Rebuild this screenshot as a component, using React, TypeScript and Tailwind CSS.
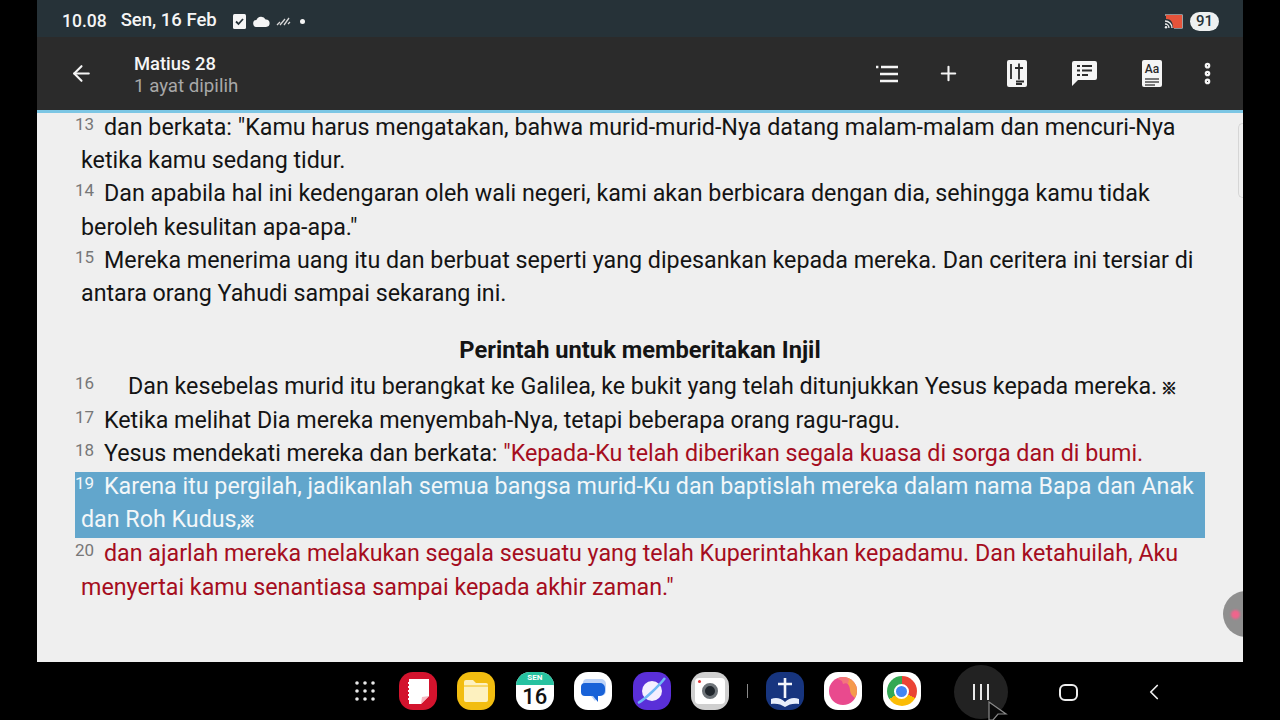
import { ArrowLeft, ChevronLeft, EllipsisVertical, Plus } from "lucide-react";
import type { ReactNode } from "react";

const Mark = () => <span className="-ml-[2px] mr-[1px] text-[16px] leading-[0] text-current [-webkit-text-stroke:0.6px_currentColor] font-['Noto_Sans_CJK_SC',sans-serif]">※</span>;

const Verse = ({ n, children, selected, wide }: { n: number; children: ReactNode; selected?: boolean; wide?: boolean }) => (
  <div className={selected ? "mt-[2px] -mb-[1px] pl-[6px] bg-[#62a6cc] text-[#f3f7f9]" : "pl-[6px]"}>
    <div className={selected ? "-translate-y-[2px]" : ""}>
      <span className={`inline-block -ml-[6px] align-top text-[17px] leading-[26px] ${wide ? "w-[53px]" : "w-[29px]"} ${selected ? "text-[#f3f7f9]" : "text-[#777]"}`}>
        {n}
      </span>
      {children}
    </div>
  </div>
);

const Red = ({ children }: { children: ReactNode }) => <span className="text-[#a50d20]">{children}</span>;

const StatusBar = () => (
  <div className="h-[37px] bg-[#263238] flex items-center pt-[5px] pl-[25px] pr-[24px] text-[18px] font-medium text-[#f5f5f5]">
    <span className="text-[17.500px]">10.08</span>
    <span className="ml-[14px] text-[18.500px]">Sen, 16 Feb</span>
    <svg className="ml-[16px]" width="13" height="15" viewBox="0 0 13 15">
      <rect width="13" height="15" rx="1.5" fill="#f5f5f5" />
      <path d="M3 7.5l2.5 2.5L10 5" stroke="#263238" strokeWidth="1.8" fill="none" />
    </svg>
    <svg className="ml-[7px]" width="17" height="11" viewBox="0 0 17 11">
      <path d="M4 11a3.5 3.5 0 0 1-.6-7A5 5 0 0 1 12.6 3.4 3.8 3.8 0 0 1 13 11z" fill="#f5f5f5" />
    </svg>
    <svg className="ml-[6px]" width="15" height="9" viewBox="0 0 15 9">
      <path d="M1 8l3-3M4 8l5-6M8 8l5-7M12 7l2-2" stroke="#d8d8d8" strokeWidth="1.3" />
    </svg>
    <span className="ml-[9px] w-[5px] h-[5px] rounded-full bg-[#f5f5f5]" />
    <svg className="ml-auto" width="19" height="15" viewBox="0 0 19 15">
      <path d="M1 1h17v13h-8" stroke="#ececec" strokeWidth="1.2" fill="none" />
      <path d="M2 1h16v13H9C9 8 7 5 2 5z" fill="#e5533a" />
      <path d="M1 7a7 7 0 0 1 7 7M1 10a4 4 0 0 1 4 4" stroke="#ececec" strokeWidth="1.3" fill="none" />
      <circle cx="2" cy="13.3" r="1.2" fill="#ececec" />
    </svg>
    <span className="ml-[7px] w-[29px] h-[19px] rounded-full bg-[#eef0f0] text-[#263238] text-[15px] font-medium flex items-center justify-center">91</span>
  </div>
);

const ToolBar = () => (
  <div className="h-[73px] bg-[#2b2b2b] flex items-center relative">
    <ArrowLeft className="ml-[32px] text-[#f5f5f5]" size={25} strokeWidth={2} />
    <div className="ml-[40px] pt-[3px] leading-[23px]">
      <div className="text-[18.400px] font-medium text-[#f5f5f5]">Matius 28</div>
      <div className="text-[18.700px] text-[#a8a8a8]">1 ayat dipilih</div>
    </div>
    <div className="ml-auto flex items-center text-[#f5f5f5]">
      <svg width="24" height="18" viewBox="0 0 24 18" stroke="#f5f5f5" strokeWidth="2.4">
        <path d="M1 2h2.4M6 2h17M5 9h18M5 16h18" />
      </svg>
      <Plus className="ml-[38px]" size={23} strokeWidth={2.2} />
      <svg className="ml-[47px]" width="20" height="27" viewBox="0 0 20 27">
        <path d="M2 0h16a2 2 0 0 1 2 2v23a2 2 0 0 1-2 2H2a2 2 0 0 1-2-2V2a2 2 0 0 1 2-2z" fill="#f5f5f5" />
        <path d="M4 4v15M8 8h8M12 3.500v16M9 21.500h8M9 24h6" stroke="#2b2b2b" strokeWidth="1.8" />
      </svg>
      <svg className="ml-[45px]" width="25" height="25" viewBox="0 0 25 25">
        <path d="M2 0h21a2 2 0 0 1 2 2v15a2 2 0 0 1-2 2H6l-6 6V2a2 2 0 0 1 2-2z" fill="#f5f5f5" />
        <path d="M5 5h3M10 5h10M5 9.500h3M10 9.500h10M5 14h3M10 14h6" stroke="#2b2b2b" strokeWidth="2" />
      </svg>
      <div className="ml-[45px] w-[20px] h-[27px] rounded-[2px] bg-[#f5f5f5] flex flex-col items-center pt-[3px]">
        <span className="text-[12px] leading-[13px] font-medium text-[#2b2b2b]">Aa</span>
        <span className="mt-[2px] w-[14px] h-[1.500px] bg-[#777]" />
        <span className="mt-[1.500px] w-[14px] h-[1.500px] bg-[#777]" />
        <span className="mt-[1.500px] w-[10px] h-[1.500px] self-start ml-[3px] bg-[#777]" />
      </div>
      <EllipsisVertical className="ml-[32px] mr-[22px]" size={27} strokeWidth={3} />
    </div>
  </div>
);

const Reader = () => (
  <div className="flex-1 bg-[#efefef] border-t-[3px] border-[#7cc6e4] relative overflow-hidden pl-[38px] pr-[38px] text-[23.250px] leading-[33.200px] text-[#141414] font-['Roboto',sans-serif]">
    <div className="-mt-[2px]">
      <Verse n={13}>dan berkata: "Kamu harus mengatakan, bahwa murid-murid-Nya datang malam-malam dan mencuri-Nya ketika kamu sedang tidur.</Verse>
      <Verse n={14}>Dan apabila hal ini kedengaran oleh wali negeri, kami akan berbicara dengan dia, sehingga kamu tidak beroleh kesulitan apa-apa."</Verse>
      <Verse n={15}>Mereka menerima uang itu dan berbuat seperti yang dipesankan kepada mereka. Dan ceritera ini tersiar di antara orang Yahudi sampai sekarang ini.</Verse>
      <h2 className="mt-[24px] mb-[3px] text-center text-[23.700px] font-bold">Perintah untuk memberitakan Injil</h2>
      <Verse n={16} wide>Dan kesebelas murid itu berangkat ke Galilea, ke bukit yang telah ditunjukkan Yesus kepada mereka. <Mark /></Verse>
      <Verse n={17}>Ketika melihat Dia mereka menyembah-Nya, tetapi beberapa orang ragu-ragu.</Verse>
      <Verse n={18}>Yesus mendekati mereka dan berkata: <Red>"Kepada-Ku telah diberikan segala kuasa di sorga dan di bumi.</Red></Verse>
      <Verse n={19} selected>Karena itu pergilah, jadikanlah semua bangsa murid-Ku dan baptislah mereka dalam nama Bapa dan Anak dan Roh Kudus,<Mark /></Verse>
      <Verse n={20}><Red>dan ajarlah mereka melakukan segala sesuatu yang telah Kuperintahkan kepadamu. Dan ketahuilah, Aku menyertai kamu senantiasa sampai kepada akhir zaman."</Red></Verse>
    </div>
    {/* scroll handle and floating bubble */}
    <div className="absolute right-0 top-[10px] w-[5px] h-[75px] rounded-l-[5px] border border-r-0 border-[#d6d6d6]" />
    <div className="absolute -right-[26px] top-[478px] w-[46px] h-[46px] rounded-full bg-[#8f8f8f] flex items-center pl-[8px]">
      <span className="w-[9px] h-[9px] rounded-full bg-[#f0648c] blur-[1px]" />
    </div>
  </div>
);

const AppIcon = ({ className, children }: { className: string; children: ReactNode }) => (
  <div className={`w-[38px] h-[38px] rounded-[14px] overflow-hidden flex items-center justify-center shrink-0 ${className}`}>{children}</div>
);

const Dock = () => (
  <div className="h-[58px] bg-black relative flex items-center pl-[317px] text-white">
    <svg width="22" height="20" viewBox="0 0 22 20" fill="#e8e8e8">
      {[2, 10, 18].map((y) => [3, 11, 19].map((x) => <circle key={`${x}-${y}`} cx={x} cy={y} r="1.800" />))}
    </svg>
    <div className="ml-[23px] flex items-center gap-[20.400px]">
      <AppIcon className="bg-[#d3132d]">
        <svg width="24" height="27" viewBox="0 0 24 27">
          <path d="M3 1h20v17l-8 8H3z" fill="#fff" />
          <path d="M15 26l1-7 7-1z" fill="#f7b9c2" />
          <path d="M3 5h-1M3 9h-1M3 13h-1M3 17h-1M3 21h-1" stroke="#fff" strokeWidth="2" />
        </svg>
      </AppIcon>
      <AppIcon className="bg-[#f2bd10]">
        <svg width="26" height="22" viewBox="0 0 26 22">
          <path d="M1 2a2 2 0 0 1 2-2h7l3 3h10a2 2 0 0 1 2 2v15a2 2 0 0 1-2 2H3a2 2 0 0 1-2-2z" fill="#fdf1bf" />
          <path d="M1 6h24" stroke="#f2bd10" strokeWidth="1" />
        </svg>
      </AppIcon>
      <AppIcon className="bg-white flex-col justify-start">
        <div className="w-full h-[13px] bg-[#27c2a0] text-white text-[8px] leading-[12px] font-bold text-center font-['Roboto',sans-serif]">SEN</div>
        <div className="text-[#111] text-[22px] leading-[24px] font-medium font-['Roboto',sans-serif]">16</div>
      </AppIcon>
      <AppIcon className="bg-white">
        <svg width="30" height="26" viewBox="0 0 30 26">
          <path d="M5 5a4 4 0 0 1 4-4h14a5 5 0 0 1 5 5v7a5 5 0 0 1-5 5h-3l-3 5-4-5H9a6 6 0 0 1-6-6z" fill="#bcd3f8" />
          <path d="M3 9a4 4 0 0 1 4-4h15a5 5 0 0 1 5 5v3a5 5 0 0 1-5 5h-2v6l-5-6H7a4 4 0 0 1-4-4z" fill="#1862d8" />
        </svg>
      </AppIcon>
      <AppIcon className="bg-[#5a2fd8]">
        <svg width="32" height="32" viewBox="0 0 32 32">
          <circle cx="16" cy="16" r="10" fill="#f5efff" />
          <path d="M2 28C8 25 22 12 29 3" stroke="#6fb8f5" strokeWidth="2.500" fill="none" />
        </svg>
      </AppIcon>
      <AppIcon className="bg-[#cfcfcf]">
        <div className="w-[30px] h-[26px] rounded-[4px] bg-white flex items-center justify-center relative">
          <span className="absolute left-[3px] top-[2px] w-[3px] h-[3px] rounded-full bg-[#e03a3a]" />
          <span className="w-[16px] h-[16px] rounded-full bg-[#20262c] border-[3px] border-[#6f757a]" />
        </div>
      </AppIcon>
      <span className="-mx-[2.500px] w-[1px] h-[14px] bg-[#8a8a8a] shrink-0" />
      <AppIcon className="bg-[#17357f]">
        <svg width="30" height="32" viewBox="0 0 30 32">
          <path d="M15 3v20M8 9h14" stroke="#f4f6fb" strokeWidth="2.600" />
          <path d="M1 24c5-2 10-1 14 3 4-4 9-5 14-3v5c-5-1-10 0-14 3-4-3-9-4-14-3z" fill="#e8eefb" />
        </svg>
      </AppIcon>
      <AppIcon className="bg-white">
        <svg width="30" height="30" viewBox="0 0 30 30">
          <circle cx="15" cy="15" r="14" fill="#e94a8e" />
          <path d="M15 1a14 14 0 0 1 14 14c0 3-1 5-2 7-3-2-5-5-5-8 0-5-4-9-7-9z" fill="#f59a4c" />
          <path d="M15 1c-3 0-5 1-6 2 2 0 3 1 5 2l1 3c2-1 4-1 5 0l1-5c-2-1-4-2-6-2z" fill="#f4757c" />
        </svg>
      </AppIcon>
      <AppIcon className="bg-white">
        <div className="w-[30px] h-[30px] rounded-full bg-[conic-gradient(#ea4335_0_33%,#fbbc05_33%_66%,#34a853_66%_100%)] flex items-center justify-center">
          <span className="w-[15px] h-[15px] rounded-full bg-[#4285f4] border-[2px] border-white" />
        </div>
      </AppIcon>
    </div>
    {/* system nav buttons */}
    <div className="absolute left-[917px] top-[3px] w-[54px] h-[54px] rounded-full bg-[#222] flex items-center justify-center gap-[5px]">
      <span className="w-[2px] h-[16px] bg-[#e8e8e8]" />
      <span className="w-[2px] h-[16px] bg-[#e8e8e8]" />
      <span className="w-[2px] h-[16px] bg-[#e8e8e8]" />
    </div>
    <span className="absolute left-[1022px] top-[22px] w-[19px] h-[17px] rounded-[6px] border-2 border-[#eee]" />
    <ChevronLeft className="absolute left-[1104px] top-[17px] text-[#eee]" size={26} strokeWidth={1.600} />
    <svg className="absolute left-[951px] top-[39px]" width="20" height="19" viewBox="0 0 20 19">
      <path d="M1 1l17 12h-8l-5 6H1z" fill="#0a0a0a" stroke="#8a8a8a" strokeWidth="1.200" />
    </svg>
  </div>
);

export default function App() {
  return (
    <div className="w-[1280px] h-[720px] bg-black px-[37px] overflow-hidden font-['Roboto',sans-serif]">
      <div className="h-full flex flex-col">
        <StatusBar />
        <ToolBar />
        <Reader />
        <Dock />
      </div>
    </div>
  );
}
